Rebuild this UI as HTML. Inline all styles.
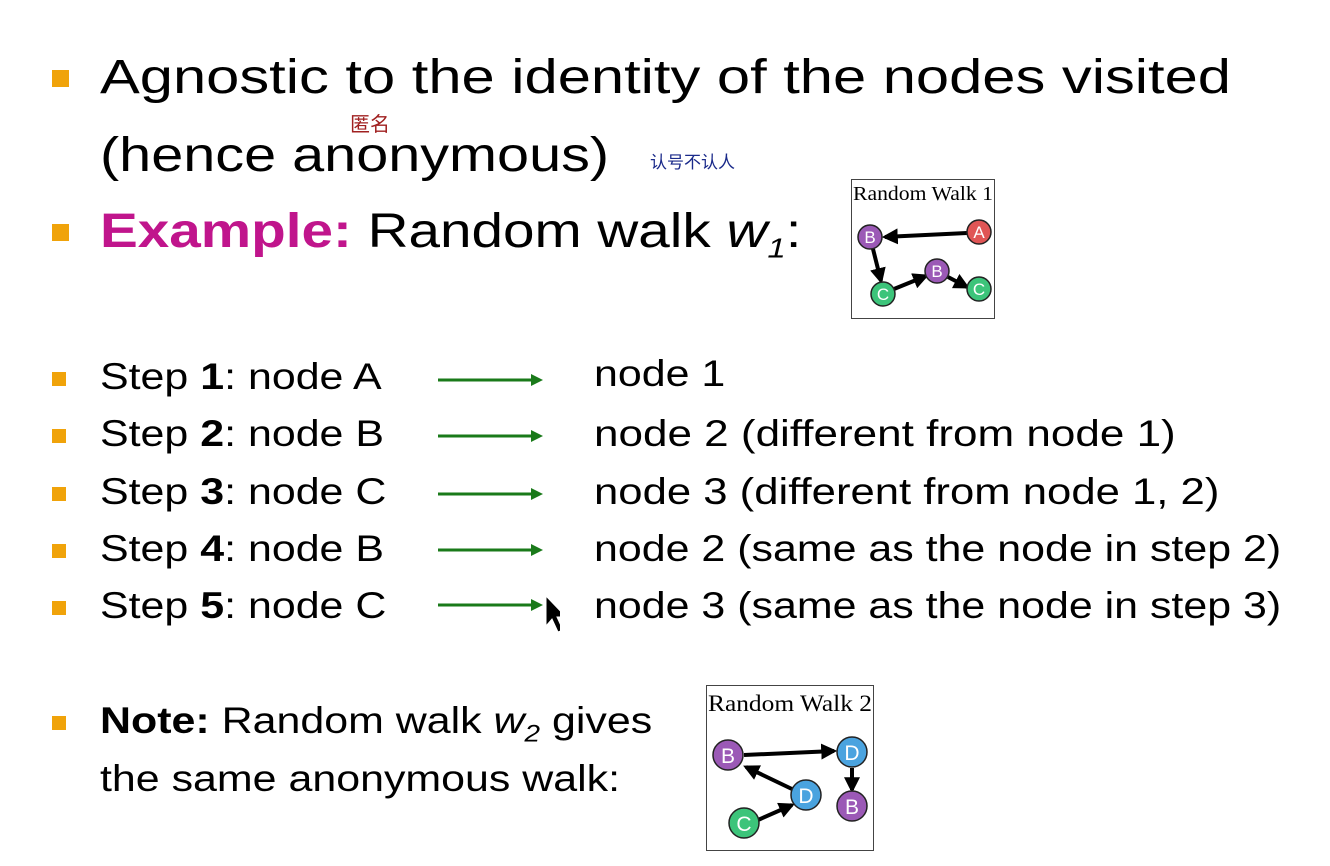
<!DOCTYPE html>
<html><head><meta charset="utf-8"><style>
body{margin:0;width:1330px;height:866px;background:#fff;overflow:hidden;position:relative;font-family:"Liberation Sans",sans-serif;color:#000}
.t{position:absolute;white-space:nowrap;transform-origin:0 50%}
.b{position:absolute;background:#f0a30a}
.big{font-size:48px}
.st{font-size:37px;transform:scaleX(1.16)}
</style></head><body>
<div class="b" style="left:52px;top:70px;width:17px;height:17px"></div>
<div class="t big" style="left:100px;top:50px;transform:scaleX(1.243)">Agnostic to the identity of the nodes visited</div>
<div class="t big" style="left:100px;top:128px;transform:scaleX(1.2)">(hence anonymous)</div>
<div class="t" style="left:350px;top:108px;font-size:20px;color:#a02020;font-family:'Noto Sans CJK SC',sans-serif">匿名</div>
<div class="t" style="left:650px;top:148px;font-size:17px;color:#1a2a8a;font-family:'Noto Sans CJK SC',sans-serif">认号不认人</div>
<div class="b" style="left:52px;top:224px;width:17px;height:17px"></div>
<div class="t big" style="left:100px;top:204px;transform:scaleX(1.18)"><b style="color:#c0158c">Example:</b> Random walk <i>w<sub style="font-size:28px">1</sub></i>:</div>
<svg style="position:absolute;left:851px;top:179px" width="145" height="141">
<defs><marker id="m" viewBox="0 0 10 10" refX="8" refY="5" markerWidth="4" markerHeight="4" orient="auto"><path d="M0 0L10 5L0 10z"/></marker></defs>
<rect x="0.5" y="0.5" width="143" height="139" fill="#fff" stroke="#444"/>
<text x="2" y="21" font-family="Liberation Serif" font-size="20" textLength="140" lengthAdjust="spacingAndGlyphs">Random Walk 1</text>
<g stroke="#000" stroke-width="4" marker-end="url(#m)">
<line x1="116" y1="54" x2="34" y2="58"/><line x1="22" y1="70" x2="30" y2="102"/><line x1="43" y1="110" x2="75" y2="97"/><line x1="97" y1="98" x2="116" y2="108"/></g>
<g stroke="#222" stroke-width="1.5">
<circle cx="19" cy="58" r="12" fill="#9b59b6"/><circle cx="128" cy="53" r="12" fill="#e05555"/><circle cx="32" cy="115" r="12" fill="#3cc47a"/><circle cx="86" cy="92" r="12" fill="#9b59b6"/><circle cx="128" cy="110" r="12" fill="#3cc47a"/></g>
<g fill="#fff" font-family="Liberation Sans" font-size="17" text-anchor="middle"><text x="19" y="64">B</text><text x="128" y="59">A</text><text x="32" y="121">C</text><text x="86" y="98">B</text><text x="128" y="116">C</text></g>
</svg>
<div class="b" style="left:52px;top:372px;width:14px;height:14px"></div>
<div class="b" style="left:52px;top:429px;width:14px;height:14px"></div>
<div class="b" style="left:52px;top:487px;width:14px;height:14px"></div>
<div class="b" style="left:52px;top:544px;width:14px;height:14px"></div>
<div class="b" style="left:52px;top:601px;width:14px;height:14px"></div>
<div class="t st" style="left:100px;top:356px">Step <b>1</b>: node A</div>
<div class="t st" style="left:100px;top:413px">Step <b>2</b>: node B</div>
<div class="t st" style="left:100px;top:471px">Step <b>3</b>: node C</div>
<div class="t st" style="left:100px;top:528px">Step <b>4</b>: node B</div>
<div class="t st" style="left:100px;top:585px">Step <b>5</b>: node C</div>
<div class="t st" style="left:594px;top:353px">node 1</div>
<div class="t st" style="left:594px;top:413px;transform:scaleX(1.19)">node 2 (different from node 1)</div>
<div class="t st" style="left:594px;top:471px;transform:scaleX(1.18)">node 3 (different from node 1, 2)</div>
<div class="t st" style="left:594px;top:528px">node 2 (same as the node in step 2)</div>
<div class="t st" style="left:594px;top:585px">node 3 (same as the node in step 3)</div>
<svg style="position:absolute;left:430px;top:360px" width="130" height="280">
<g stroke="#1a7a1a" stroke-width="3">
<line x1="8" y1="20" x2="104" y2="20"/><line x1="8" y1="76" x2="104" y2="76"/><line x1="8" y1="134" x2="104" y2="134"/><line x1="8" y1="190" x2="104" y2="190"/><line x1="8" y1="245" x2="104" y2="245"/></g>
<g fill="#1a7a1a"><path d="M101 14L113 20L101 26z"/><path d="M101 70L113 76L101 82z"/><path d="M101 128L113 134L101 140z"/><path d="M101 184L113 190L101 196z"/><path d="M101 239L113 245L101 251z"/></g>
<path d="M116 236L116 266L122 259L128 272L133 270L127 257L136 257z" fill="#000" stroke="#fff" stroke-width="1"/>
</svg>
<div class="b" style="left:52px;top:716px;width:14px;height:14px"></div>
<div class="t st" style="left:100px;top:700px"><b>Note:</b> Random walk <i>w<sub style="font-size:24px">2</sub></i> gives</div>
<div class="t st" style="left:100px;top:758px">the same anonymous walk:</div>
<svg style="position:absolute;left:706px;top:685px" width="170" height="168">
<defs><marker id="n" viewBox="0 0 10 10" refX="8" refY="5" markerWidth="4" markerHeight="4" orient="auto"><path d="M0 0L10 5L0 10z"/></marker></defs>
<rect x="0.5" y="0.5" width="167" height="165" fill="#fff" stroke="#444"/>
<text x="2" y="26" font-family="Liberation Serif" font-size="23" textLength="164" lengthAdjust="spacingAndGlyphs">Random Walk 2</text>
<g stroke="#000" stroke-width="4" marker-end="url(#n)">
<line x1="38" y1="70" x2="128" y2="66"/><line x1="146" y1="83" x2="146" y2="105"/><line x1="88" y1="105" x2="40" y2="82"/><line x1="52" y1="135" x2="86" y2="120"/></g>
<g stroke="#222" stroke-width="1.5">
<circle cx="22" cy="70" r="15" fill="#9b59b6"/><circle cx="146" cy="67" r="15" fill="#4aa3df"/><circle cx="100" cy="110" r="15" fill="#4aa3df"/><circle cx="146" cy="121" r="15" fill="#9b59b6"/><circle cx="38" cy="138" r="15" fill="#3cc47a"/></g>
<g fill="#fff" font-family="Liberation Sans" font-size="21" text-anchor="middle"><text x="22" y="78">B</text><text x="146" y="75">D</text><text x="100" y="118">D</text><text x="146" y="129">B</text><text x="38" y="146">C</text></g>
</svg>
</body></html>
